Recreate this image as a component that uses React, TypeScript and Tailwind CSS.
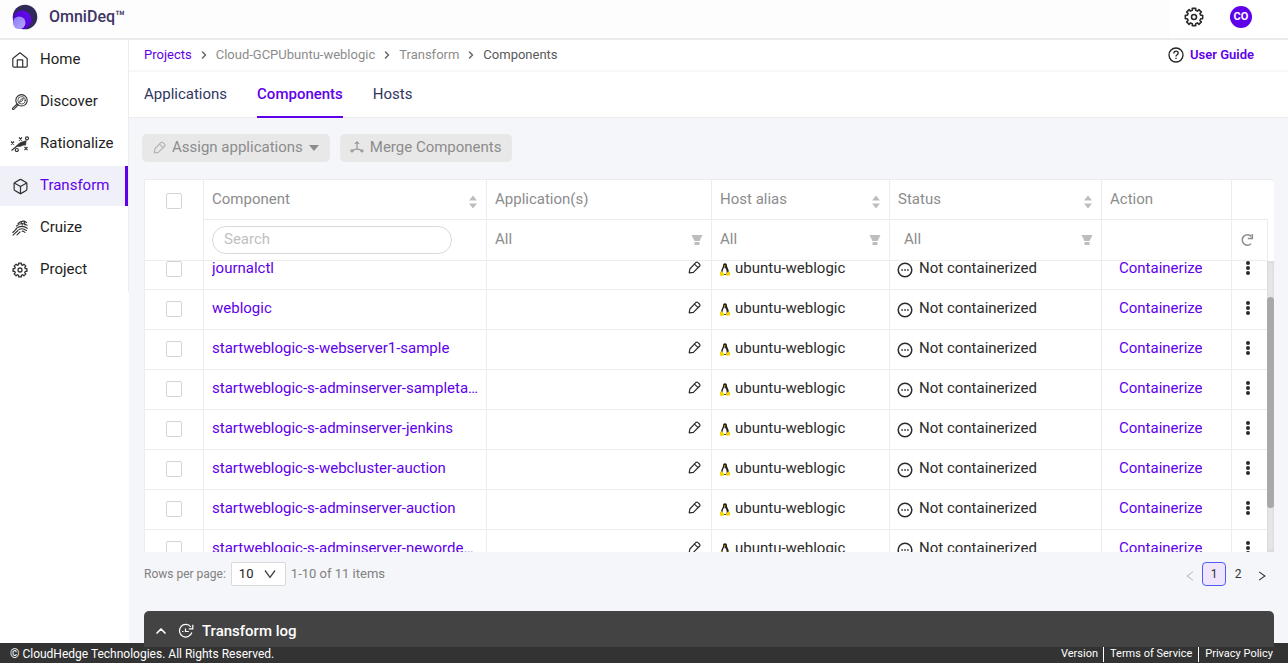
import type { ReactNode } from "react";
import { Box, ChevronRight, ChevronUp } from "lucide-react";

type IconProps = {
  className?: string;
};

// Outline of an eight-toothed cog in a 24x24 box.
function cogPath(): string {
  const parts: string[] = [];
  for (let i = 0; i < 8; i += 1) {
    const mid = (i * Math.PI) / 4;
    const points = [
      [-0.25, 8.2],
      [-0.2, 10.6],
      [0.2, 10.6],
      [0.25, 8.2],
    ];
    for (const [offset, radius] of points) {
      const x = 12 + radius * Math.sin(mid + offset);
      const y = 12 - radius * Math.cos(mid + offset);
      parts.push(`${x.toFixed(2)} ${y.toFixed(2)}`);
    }
  }
  return `M${parts.join("L")}Z`;
}

const COG_PATH = cogPath();

function CogIcon({ className }: IconProps) {
  return (
    <svg viewBox="0 0 24 24" className={className} fill="none" stroke="currentColor" strokeWidth="1.900" strokeLinejoin="round" aria-hidden="true">
      <path d={COG_PATH} />
      <circle cx="12" cy="12" r="3" />
    </svg>
  );
}

function LogoIcon({ className }: IconProps) {
  return (
    <svg viewBox="0 0 26 26" className={className} aria-hidden="true">
      <defs>
        <linearGradient id="logo-mid" x1="0" y1="1" x2="1" y2="0">
          <stop offset="0" stopColor="#4300c0" />
          <stop offset="1" stopColor="#6a0cf5" />
        </linearGradient>
        <linearGradient id="logo-front" x1="0" y1="0" x2="1" y2="1">
          <stop offset="0" stopColor="#8a7af5" />
          <stop offset="1" stopColor="#b9a8ff" />
        </linearGradient>
      </defs>
      <circle cx="13" cy="13" r="12.3" fill="#2f2a58" />
      <circle cx="10.200" cy="15.800" r="9.300" fill="url(#logo-mid)" />
      <circle cx="7.200" cy="18.800" r="6.300" fill="url(#logo-front)" />
    </svg>
  );
}

function HomeIcon({ className }: IconProps) {
  return (
    <svg viewBox="0 0 16 16" className={className} fill="none" stroke="currentColor" strokeWidth="1.200" strokeLinejoin="round" aria-hidden="true">
      <path d="M.8 6.500 8 .8l7.200 5.700V14a1.200 1.200 0 0 1-1.200 1.200H2A1.200 1.200 0 0 1 .8 14z" />
      <path d="M5.300 15V7.800h5.400V15" />
    </svg>
  );
}

function DiscoverIcon({ className }: IconProps) {
  return (
    <svg viewBox="0 0 16 16" className={className} fill="none" stroke="currentColor" strokeWidth="1.100" strokeLinecap="round" aria-hidden="true">
      <circle cx="9.500" cy="6.300" r="5.700" />
      <circle cx="9.500" cy="6.300" r="3.700" strokeWidth=".8" />
      <path d="m7.500 8 1.200-2.500 2.800-1.300-1.200 2.500z" strokeWidth=".8" />
      <path d="m5.200 10-4.500 4.200a.7.7 0 0 0 1 1.100l4.700-4.400" />
    </svg>
  );
}

function RationalizeIcon({ className }: IconProps) {
  return (
    <svg viewBox="0 0 20 16" className={className} fill="none" stroke="currentColor" strokeWidth="1.200" aria-hidden="true">
      <path d="m1 5.500 3 3m0-3-3 3M9 1.500l3 3m0-3-3 3M14.500 11l3 3m0-3-3 3" />
      <circle cx="17" cy="2.300" r="1.500" />
      <circle cx="6.800" cy="14" r="1.500" />
      <path d="M1.500 14.500 7 10" />
      <path d="M6.500 9.800C8.500 8 10 6 13 5.800l3.300-1.300-.8 4.800-1.500-.4c-2.500 1-4.500 2.300-7.500 1.300z" fill="currentColor" strokeWidth=".6" />
    </svg>
  );
}

function CruizeIcon({ className }: IconProps) {
  return (
    <svg viewBox="0 0 16 16" className={className} fill="none" stroke="currentColor" strokeWidth="1.100" strokeLinecap="round" aria-hidden="true">
      <path d="M6 3.500C9 .8 12 .5 14.500 2.500M4.500 6c3-2.800 7-3.200 10.500-.8M4 8.700c3-2.500 7.500-2.900 11.300-.5M7 9.500c2.500-1.300 5-.8 7.500 1M10 11.200c1.200-.2 2.200.3 3 1.300" />
      <path d="m.8 12.500 3.500-3.300M1 15.200l5-4.700M5 14.800l3-2.800M9 2l1.500 3M12 1.500 13 5" />
    </svg>
  );
}

function PencilIcon({ className }: IconProps) {
  return (
    <svg viewBox="0 0 14 14" className={className} fill="none" stroke="currentColor" strokeWidth="1.300" strokeLinejoin="round" aria-hidden="true">
      <path d="M1.300 12.700 2 8.600l6.300-6.800a1.700 1.700 0 0 1 2.400 0l1.600 1.500a1.700 1.700 0 0 1 0 2.400L5.800 12.200z" />
      <path d="m6.900 3.400 4 3.700" />
    </svg>
  );
}

function MergeIcon({ className }: IconProps) {
  return (
    <svg viewBox="0 0 16 14" className={className} fill="none" stroke="currentColor" strokeWidth="1.200" strokeLinejoin="round" aria-hidden="true">
      <path d="M5.500 3.500 8 1l2.500 2.500M8 1v8M3.300 11 6 9.500h4l2.700 1.500" />
      <circle cx="2.200" cy="11.500" r="1.300" />
      <circle cx="13.800" cy="11.500" r="1.300" />
    </svg>
  );
}

function PenguinIcon({ className }: IconProps) {
  return (
    <svg viewBox="0 0 10 13" className={className} aria-hidden="true">
      <path d="M5 .3c-1.500 0-2.100 1-2 2.500.1 1.700-2 3.400-2 6.400L2.500 12h5L9 9.200c0-3-2.100-4.700-2-6.400C7.100 1.300 6.500.3 5 .3z" fill="#222" />
      <path d="M4.600 4.200C3.200 5.300 2.300 7.500 2.600 10.600c1 .9 3.200.9 4 0C7 8 6.200 5.500 4.600 4.200z" fill="#fff" />
      <path d="M3.500 2.600h2.400L4.600 4.200z" fill="#e8b000" />
      <path d="M0 9 1.900 8.300l2.400 3-1.100 1.700-3.200-.6zM10 9.200 8.200 8.300 5.800 11.300l1 1.700 3.200-.8z" fill="#f2d600" />
    </svg>
  );
}

function PendingIcon({ className }: IconProps) {
  return (
    <svg viewBox="0 0 16 16" className={className} fill="none" stroke="currentColor" aria-hidden="true">
      <circle cx="8" cy="8" r="6.800" strokeWidth="1.500" />
      <path d="M4.300 8h1.600m1.300 0h1.600m1.300 0h1.600" strokeWidth="1.500" />
    </svg>
  );
}

function HelpIcon({ className }: IconProps) {
  return (
    <svg viewBox="0 0 16 16" className={className} fill="none" stroke="currentColor" strokeWidth="1.300" aria-hidden="true">
      <circle cx="8" cy="8" r="7" />
      <path d="M5.800 6.400C5.800 5 6.700 4.200 8 4.200s2.200.8 2.200 2c0 1.600-2.200 1.700-2.200 3.300M8 10.700v1.400" />
    </svg>
  );
}

function DotsIcon({ className }: IconProps) {
  return (
    <svg viewBox="0 0 4 14" className={className} fill="currentColor" aria-hidden="true">
      <circle cx="2" cy="2" r="2" />
      <circle cx="2" cy="7" r="2" />
      <circle cx="2" cy="12" r="2" />
    </svg>
  );
}

function FilterIcon({ className }: IconProps) {
  return (
    <svg viewBox="0 0 12 10" className={className} fill="currentColor" aria-hidden="true">
      <path d="M.5 0h11L8.500 6h-5zM3.500 7h5v3h-5z" />
    </svg>
  );
}

function SortIcon({ className }: IconProps) {
  return (
    <svg viewBox="0 0 8 14" className={className} fill="currentColor" aria-hidden="true">
      <path d="m4 .5 4 5H0zM4 13.500l4-5H0z" />
    </svg>
  );
}

function ReloadIcon({ className }: IconProps) {
  return (
    <svg viewBox="0 0 14 14" className={className} fill="none" stroke="currentColor" strokeWidth="1.500" aria-hidden="true">
      <path d="M11 10.800a5.200 5.200 0 1 1 .3-7.300" />
      <path d="M12.300 1v4.500H7.800" />
    </svg>
  );
}

function LogIcon({ className }: IconProps) {
  return (
    <svg viewBox="0 0 16 16" className={className} fill="none" stroke="currentColor" strokeWidth="1.200" aria-hidden="true">
      <path d="M13.800 9.500A6.300 6.300 0 1 1 12.800 4" />
      <path d="M14.800 1.800v4h-4M4 8.500h1.500M7.500 5.500v3h3.300" />
    </svg>
  );
}

// Thin wide chevron used by the page-size select and the pager.
function ThinChevron({ className }: IconProps) {
  return (
    <svg viewBox="0 0 12 12" className={className} fill="none" stroke="currentColor" strokeWidth="1.300" aria-hidden="true">
      <path d="m1 2.500 5 7 5-7" />
    </svg>
  );
}

type NavItem = {
  label: string;
  icon: ReactNode;
};

const NAV_ITEMS: NavItem[] = [
  { label: "Home", icon: <HomeIcon className="size-4" /> },
  { label: "Discover", icon: <DiscoverIcon className="size-4" /> },
  { label: "Rationalize", icon: <RationalizeIcon className="h-4 w-5 shrink-0" /> },
  { label: "Transform", icon: <Box className="size-[17px]" strokeWidth={1.7} /> },
  { label: "Cruize", icon: <CruizeIcon className="size-4" /> },
  { label: "Project", icon: <CogIcon className="size-4" /> },
];

const TABS = ["Applications", "Components", "Hosts"];

const COMPONENTS = [
  "journalctl",
  "weblogic",
  "startweblogic-s-webserver1-sample",
  "startweblogic-s-adminserver-sampletarget",
  "startweblogic-s-adminserver-jenkins",
  "startweblogic-s-webcluster-auction",
  "startweblogic-s-adminserver-auction",
  "startweblogic-s-adminserver-newordemanager",
];

const CHECKBOX =
  "block size-4 appearance-none rounded-xs border border-[#d4d4d4] bg-white checked:bg-[#5f00ea]";
const HEAD_CELL = "border-r border-b border-[#ececec] px-2 text-left font-normal";
const BODY_CELL = "border-r border-b border-[#ececec]";

function Columns() {
  return (
    <colgroup>
      <col className="w-[59px]" />
      <col />
      <col className="w-[225px]" />
      <col className="w-[178px]" />
      <col className="w-[212px]" />
      <col className="w-[130px]" />
      <col className="w-9" />
    </colgroup>
  );
}

function TopBar() {
  return (
    <header className="flex h-10 shrink-0 border-b-2 border-[#ebebeb] bg-[#fdfdfd]">
      <div className="flex flex-1 items-center gap-[11px] pb-1 pl-3">
        <LogoIcon className="size-[26px]" />
        <span className="text-base font-medium text-[#3d3564]">OmniDeq™</span>
      </div>
      <div className="flex items-center gap-[26px] bg-white pr-9 pb-1 pl-3.5">
        <button type="button" aria-label="Settings">
          <CogIcon className="size-5" />
        </button>
        <button type="button" className="size-[22px] rounded-full bg-[#5f00ea] text-[11px] font-bold text-white">
          CO
        </button>
      </div>
    </header>
  );
}

function SideNav() {
  return (
    <nav className="w-[129px] shrink-0 bg-white">
      <ul className="border-r border-[#ececec]">
        {NAV_ITEMS.map((item) => {
          const active = item.label === "Transform";
          return (
            <li key={item.label} className="pb-0.5">
              <a
                href="#"
                className={`flex h-10 items-center text-[15px] ${
                  active ? "border-r-3 border-[#5f00ea] bg-[#f0f0f9] text-[#5f00ea]" : "text-[#222]"
                }`}
              >
                <span className="flex w-10 shrink-0 items-center justify-center text-[#333]">{item.icon}</span>
                <span className="pb-0.5">{item.label}</span>
              </a>
            </li>
          );
        })}
      </ul>
    </nav>
  );
}

function Breadcrumbs() {
  return (
    <div className="flex h-8 shrink-0 items-center justify-between border-b-2 border-[#f7f7f7] bg-white pr-[34px] pl-[15px]">
      <div className="flex items-center gap-1.5 text-[13px] text-[#8c8c8c]">
        <a href="#" className="text-[#5f00ea]">Projects</a>
        <ChevronRight className="size-3 text-[#666]" strokeWidth={3} />
        <a href="#">Cloud-GCPUbuntu-weblogic</a>
        <ChevronRight className="size-3 text-[#666]" strokeWidth={3} />
        <a href="#">Transform</a>
        <ChevronRight className="size-3 text-[#666]" strokeWidth={3} />
        <span className="text-[#595959]">Components</span>
      </div>
      <a href="#" className="flex items-center gap-1.5 text-[13px] font-semibold text-[#5f00ea]">
        <HelpIcon className="size-4 text-[#222]" />
        User Guide
      </a>
    </div>
  );
}

function Tabs() {
  return (
    <div role="tablist" className="flex h-[46px] shrink-0 gap-[30px] border-b border-[#ececec] bg-white pl-[15px] text-[15px]">
      {TABS.map((tab) => {
        const active = tab === "Components";
        return (
          <button
            key={tab}
            type="button"
            role="tab"
            aria-selected={active}
            className={`-mb-px border-b-2 ${
              active ? "border-[#5f00ea] font-medium text-[#5f00ea]" : "border-transparent text-[#30365f]"
            }`}
          >
            {tab}
          </button>
        );
      })}
    </div>
  );
}

function Toolbar() {
  const button = "flex h-7 items-center gap-1.5 rounded-[5px] bg-[#e8e8e8] pb-0.5 text-[15px] text-[#8c8c8c]";
  return (
    <div className="flex shrink-0 gap-2.5 pt-4 pb-[17px] pl-[13px]">
      <button type="button" disabled className={`${button} px-[11px]`}>
        <PencilIcon className="size-[13px] text-[#b5b5b5]" />
        Assign applications
        <svg viewBox="0 0 10 6" className="mt-0.5 h-1.5 w-2.5" fill="currentColor" aria-hidden="true">
          <path d="M0 0h10L5 6z" />
        </svg>
      </button>
      <button type="button" disabled className={`${button} px-2.5`}>
        <MergeIcon className="h-3 w-3.5" />
        Merge Components
      </button>
    </div>
  );
}

type FilterProps = {
  label: string;
};

function Filter({ label }: FilterProps) {
  return (
    <div className="flex items-center justify-between">
      <select aria-label={label} className="appearance-none bg-transparent pb-0.5">
        <option>All</option>
      </select>
      <FilterIcon className="h-2.5 w-3 text-[#bdbdbd]" />
    </div>
  );
}

type SortableProps = {
  label: string;
};

function Sortable({ label }: SortableProps) {
  return (
    <button type="button" className="flex w-full items-center justify-between pr-px">
      {label}
      <SortIcon className="mt-1 h-3.5 w-2 text-[#bdbdbd]" />
    </button>
  );
}

function TableHead() {
  return (
    <table className="w-full table-fixed border-separate border-spacing-0">
      <Columns />
      <thead className="text-[#8c8c8c]">
        <tr className="h-10">
          <th rowSpan={2} className="border-r border-b border-[#ececec] pt-[13px] pl-[21px] align-top">
            <input type="checkbox" aria-label="Select all" className={CHECKBOX} />
          </th>
          <th className={HEAD_CELL}><Sortable label="Component" /></th>
          <th className={HEAD_CELL}>Application(s)</th>
          <th className={HEAD_CELL}><Sortable label="Host alias" /></th>
          <th className={HEAD_CELL}><Sortable label="Status" /></th>
          <th className={HEAD_CELL}>Action</th>
          <th className="border-b border-[#ececec]" />
        </tr>
        <tr className="h-[41px]">
          <th className={HEAD_CELL}>
            <input
              type="text"
              aria-label="Search components"
              placeholder="Search"
              className="block h-7 w-60 rounded-full border border-[#d9d9d9] px-[11px] pb-0.5 placeholder:text-[#bfbfbf]"
            />
          </th>
          <th className={HEAD_CELL}><Filter label="Filter applications" /></th>
          <th className={HEAD_CELL}><Filter label="Filter host alias" /></th>
          <th className={`${HEAD_CELL} pl-3.5`}><Filter label="Filter status" /></th>
          <th className={HEAD_CELL} />
          <th className={HEAD_CELL}>
            <button type="button" aria-label="Reload" className="block">
              <ReloadIcon className="size-3.5" />
            </button>
          </th>
        </tr>
      </thead>
    </table>
  );
}

function ComponentTable() {
  return (
    <div className="mr-3.5 ml-[15px] flex min-h-0 flex-1 flex-col rounded-tr-sm border-t border-l border-[#ececec] bg-white text-[15px]">
      <div className="pr-1.5">
        <TableHead />
      </div>
      <div className="flex min-h-0 flex-1 overflow-hidden">
        <div className="min-w-0 flex-1">
          {/* list is scrolled part of the way through its first row */}
          <table className="-mt-[11px] w-full table-fixed border-separate border-spacing-0">
            <Columns />
            <tbody className="text-[#2b2b2b]">
              {COMPONENTS.map((name) => (
                <tr key={name} className="h-10">
                  <td className={`${BODY_CELL} pb-0.5 pl-[21px]`}>
                    <input type="checkbox" aria-label={`Select ${name}`} className={CHECKBOX} />
                  </td>
                  <td className={`${BODY_CELL} pr-1 pl-2`}>
                    <a href="#" className="block truncate pb-0.5 text-[#5f00ea]">{name}</a>
                  </td>
                  <td className={`${BODY_CELL} px-2`}>
                    <button type="button" aria-label={`Edit ${name}`} className="mr-0.5 mb-1 ml-auto block">
                      <PencilIcon className="size-[13px]" />
                    </button>
                  </td>
                  <td className={`${BODY_CELL} px-2`}>
                    <span className="flex items-center gap-[5px]">
                      <PenguinIcon className="h-[13px] w-2.5" />
                      <span className="pb-0.5">ubuntu-weblogic</span>
                    </span>
                  </td>
                  <td className={`${BODY_CELL} px-[7px]`}>
                    <span className="flex items-center gap-1.5">
                      <PendingIcon className="size-4" />
                      <span className="pb-0.5">Not containerized</span>
                    </span>
                  </td>
                  <td className={`${BODY_CELL} pl-[17px]`}>
                    <button type="button" className="block pb-0.5 text-[#5f00ea]">Containerize</button>
                  </td>
                  <td className="border-b border-[#ececec]">
                    <button type="button" aria-label={`More actions for ${name}`} className="mb-1 ml-3.5 block">
                      <DotsIcon className="h-3.5 w-1" />
                    </button>
                  </td>
                </tr>
              ))}
            </tbody>
          </table>
        </div>
        <div className="-ml-px w-[7px] shrink-0 bg-[#e8e8e8] pt-9 shadow-[inset_0_0_4px_#cfcfcf]">
          <div className="h-[211px] rounded-full bg-[#a8a8a8]" />
        </div>
      </div>
    </div>
  );
}

function Pagination() {
  return (
    <div className="mr-3.5 ml-[15px] flex h-[59px] shrink-0 items-start justify-between pt-2.5 text-xs text-[#808080]">
      <div className="flex items-center gap-[5px]">
        <label htmlFor="rows-per-page">Rows per page:</label>
        <span className="relative">
          <select
            id="rows-per-page"
            className="block h-6 w-[55px] appearance-none rounded-xs border border-[#d9d9d9] bg-white pl-[7px] text-[13px] text-[#222]"
          >
            <option>10</option>
            <option>20</option>
          </select>
          <ThinChevron className="pointer-events-none absolute top-1.5 right-2.5 size-3 text-[#444]" />
        </span>
        <span className="text-[13px]">1-10 of 11 items</span>
      </div>
      <div className="flex items-center pr-[7px] text-[#333]">
        <button type="button" aria-label="Previous page" disabled className="pt-1 text-[#bfbfbf]">
          <ThinChevron className="size-2.5 rotate-90" />
        </button>
        <button type="button" className="ml-[7px] size-6 rounded-sm border border-[#4c5cf5] bg-[#efe5fd]">1</button>
        <button type="button" className="w-6">2</button>
        <button type="button" aria-label="Next page" className="ml-[7px] pt-1">
          <ThinChevron className="size-2.5 -rotate-90" />
        </button>
      </div>
    </div>
  );
}

function Footer() {
  return (
    <footer className="flex h-5 shrink-0 items-center justify-between bg-[#333] pt-0.5 pr-[15px] pl-2.5 text-white">
      <span className="text-xs">© CloudHedge Technologies. All Rights Reserved.</span>
      <div className="flex divide-x divide-white text-[11px]">
        <a href="#" className="pr-[5px]">Version</a>
        <a href="#" className="px-1.5">Terms of Service</a>
        <a href="#" className="pl-1.5">Privacy Policy</a>
      </div>
    </footer>
  );
}

export default function App() {
  return (
    <div className="flex h-screen flex-col bg-[#f5f6f9] font-[Roboto,'Noto_Sans',sans-serif] text-[#2b2b2b]">
      <TopBar />
      <div className="flex min-h-0 flex-1">
        <SideNav />
        <main className="flex min-w-0 flex-1 flex-col">
          <Breadcrumbs />
          <Tabs />
          <Toolbar />
          <ComponentTable />
          <Pagination />
          <button
            type="button"
            className="relative mr-3.5 -mb-1 ml-[15px] flex h-9 shrink-0 items-center gap-2 rounded-t-[5px] bg-[#434343] px-[9px] pt-1 text-[15px] font-medium text-white"
          >
            <ChevronUp className="size-4" strokeWidth={2.5} />
            <LogIcon className="ml-px size-4" />
            Transform log
          </button>
        </main>
      </div>
      <Footer />
    </div>
  );
}
